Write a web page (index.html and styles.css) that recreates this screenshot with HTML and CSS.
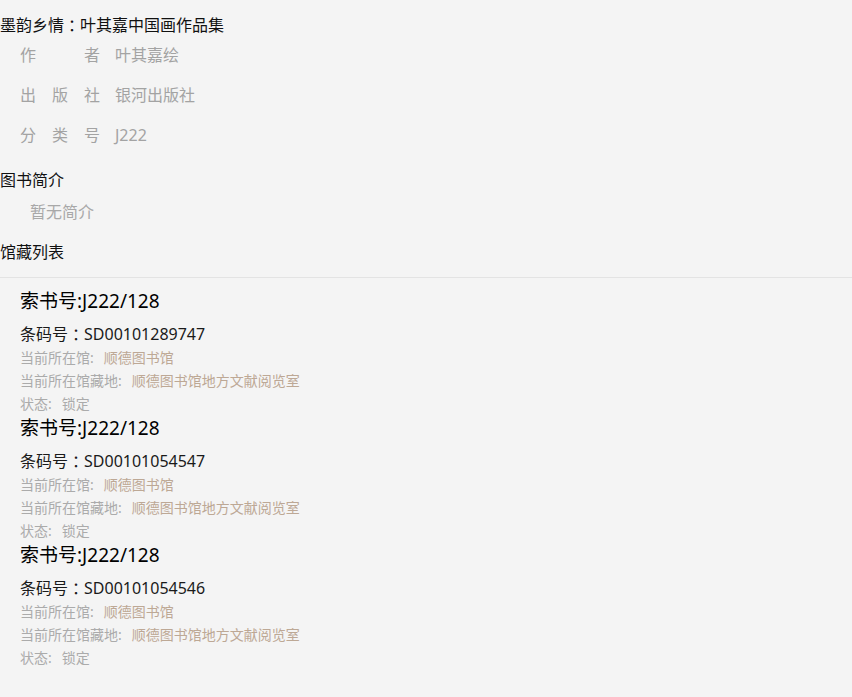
FILE: index.html
```html
<!DOCTYPE html>
<html>
<head>
    <meta charset="UTF-8">
    <link rel="stylesheet" href="styles.css">
</head>
<body>
    <div class="book-title">墨韵乡情<span class="colon">：</span>叶其嘉中国画作品集</div>
    <div class="book-info">
        <div class="info-row">
            <span class="info-label">作者</span>
            <span class="info-value">叶其嘉绘</span>
        </div>
        <div class="info-row">
            <span class="info-label">出版社</span>
            <span class="info-value">银河出版社</span>
        </div>
        <div class="info-row">
            <span class="info-label">分类号</span>
            <span class="info-value">J222</span>
        </div>
    </div>

    <div class="section-title">图书简介</div>
    <div class="summary">暂无简介</div>

    <div class="section-title list-title">馆藏列表</div>
    <div class="holding-list">
        <div class="holding">
            <div class="call-no">索书号:J222/128</div>
            <div class="barcode">条码号<span class="colon">：</span>SD00101289747</div>
            <div class="detail"><span class="detail-label">当前所在馆:</span><span class="detail-value">顺德图书馆</span></div>
            <div class="detail"><span class="detail-label">当前所在馆藏地:</span><span class="detail-value">顺德图书馆地方文献阅览室</span></div>
            <div class="detail"><span class="detail-label">状态:</span><span class="detail-value state">锁定</span></div>
        </div>
        <div class="holding">
            <div class="call-no">索书号:J222/128</div>
            <div class="barcode">条码号<span class="colon">：</span>SD00101054547</div>
            <div class="detail"><span class="detail-label">当前所在馆:</span><span class="detail-value">顺德图书馆</span></div>
            <div class="detail"><span class="detail-label">当前所在馆藏地:</span><span class="detail-value">顺德图书馆地方文献阅览室</span></div>
            <div class="detail"><span class="detail-label">状态:</span><span class="detail-value state">锁定</span></div>
        </div>
        <div class="holding">
            <div class="call-no">索书号:J222/128</div>
            <div class="barcode">条码号<span class="colon">：</span>SD00101054546</div>
            <div class="detail"><span class="detail-label">当前所在馆:</span><span class="detail-value">顺德图书馆</span></div>
            <div class="detail"><span class="detail-label">当前所在馆藏地:</span><span class="detail-value">顺德图书馆地方文献阅览室</span></div>
            <div class="detail"><span class="detail-label">状态:</span><span class="detail-value state">锁定</span></div>
        </div>
    </div>
</body>
</html>
```

FILE: styles.css
```css
body {
    margin: 0;
    font-family: "Noto Sans", "Noto Sans CJK SC", sans-serif;
    font-size: 16px;
    background-color: #f4f4f4;
    color: #111;
}
.colon {
    font-family: "Noto Sans CJK JP", sans-serif;
    vertical-align: top;
}
.book-title {
    margin-top: 14px;
    height: 23px;
    line-height: 23px;
}
.book-info {
    margin-top: -2px;
    padding-left: 20px;
}
.info-row {
    display: flex;
    line-height: 40px;
    color: #a3a3a3;
}
.info-label {
    width: 80px;
    margin-right: 15px;
    text-align: justify;
    text-align-last: justify;
}
.section-title {
    margin-top: 13px;
    line-height: 24px;
}
.summary {
    padding-left: 30px;
    line-height: 30px;
    margin-top: 5px;
    color: #a8a8a8;
}
.list-title {
    margin-top: 13px;
    padding-bottom: 13px;
    border-bottom: 1px solid #e3e3e3;
}
.holding-list {
    padding: 11px 20px 0;
}
.holding {
    padding-bottom: 1px;
}
.call-no {
    font-size: 19px;
    height: 24px;
    line-height: 24px;
    color: #000;
}
.barcode {
    margin-top: 9px;
    height: 24px;
    line-height: 24px;
    color: #1a1a1a;
}
.detail {
    font-size: 14px;
    height: 23px;
    line-height: 23px;
}
.detail span {
    vertical-align: top;
}
.detail-label {
    color: #ababab;
    margin-right: 10px;
}
.detail-value {
    color: #bda895;
}
.detail-value.state {
    color: #ababab;
}
```
